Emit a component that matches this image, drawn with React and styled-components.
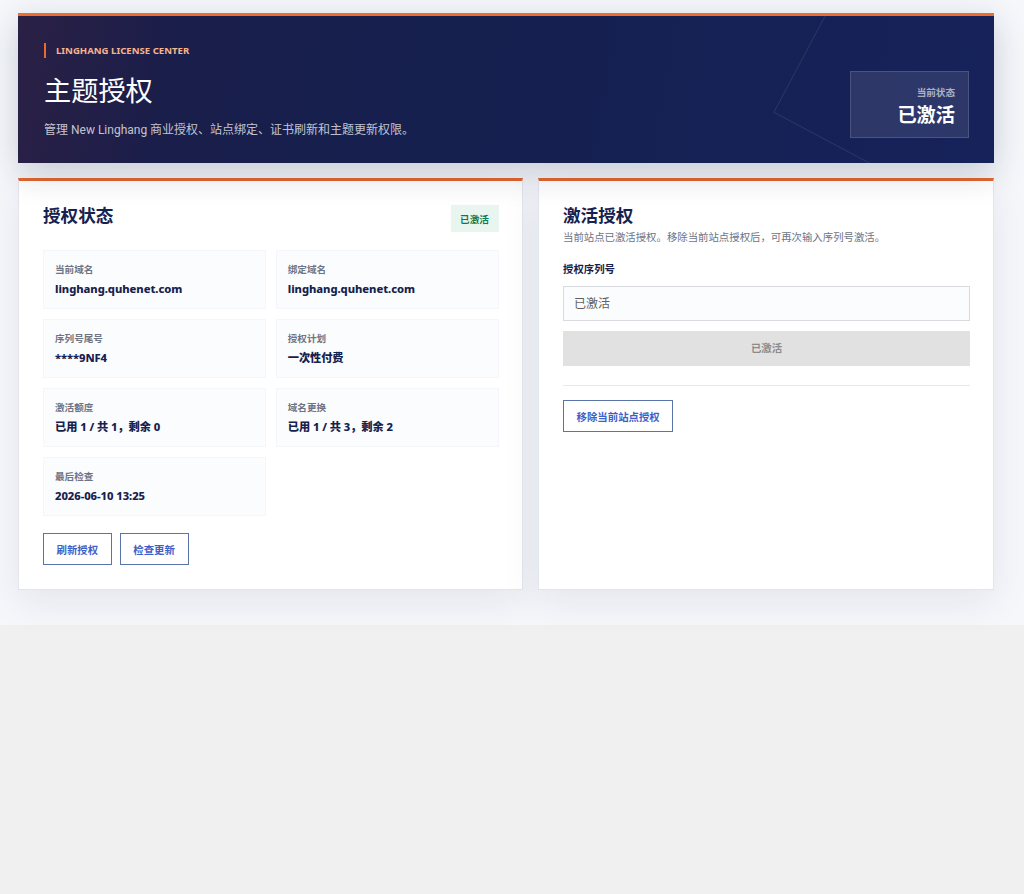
import React from "react";
import styled, { createGlobalStyle } from "styled-components";

const GlobalStyle = createGlobalStyle`
  * {
    box-sizing: border-box;
  }
  html,
  body {
    margin: 0;
    padding: 0;
    background: #f0f0f1;
  }
  body {
    min-height: 894px;
    font-family: "Noto Sans", "Noto Sans CJK SC", sans-serif;
    color: #16214d;
  }
`;

const Page = styled.div`
  background: #f5f7fb;
  padding: 13px 30px 35px 18px;
`;

const Hero = styled.header`
  position: relative;
  display: flex;
  justify-content: space-between;
  align-items: flex-start;
  height: 150px;
  padding: 27px 25px 0 26px;
  overflow: hidden;
  color: #fff;
  border-top: 3px solid #ee6c2c;
  background: linear-gradient(100deg, #2b2045 0%, #1a1e4a 16%, #15204f 45%, #16225a 100%);
`;

const HeroShadow = styled.div`
  position: relative;
  z-index: 1;
  box-shadow: 0 10px 32px rgba(22, 30, 60, 0.2);
`;

const HeroShape = styled.div`
  position: absolute;
  top: -59px;
  right: -38px;
  width: 220px;
  height: 220px;
  border: 1px solid rgba(255, 255, 255, 0.09);
  transform: rotate(28deg);
`;

const HeroText = styled.div`
  position: relative;
`;

const Eyebrow = styled.div`
  display: flex;
  align-items: center;
  height: 15px;
  padding-left: 10px;
  border-left: 2px solid #ea6a2a;
  font-size: 9.6px;
  font-weight: 700;
  color: #f8b48c;
`;

const HeroTitle = styled.h1`
  margin: 13px 0 0;
  font-size: 27.2px;
  line-height: 40px;
  font-weight: 400;
`;

const HeroSub = styled.p`
  margin: 10px 0 0;
  font-family: Roboto, "Noto Sans CJK SC", sans-serif;
  font-size: 12px;
  line-height: 18px;
  color: rgba(255, 255, 255, 0.74);
`;

const StatusBox = styled.div`
  position: relative;
  width: 119px;
  height: 67px;
  margin-top: 28px;
  padding: 14px 13px 0 0;
  text-align: right;
  border: 1px solid rgba(255, 255, 255, 0.14);
  background: rgba(255, 255, 255, 0.1);
`;

const StatusLabel = styled.div`
  font-size: 9.6px;
  line-height: 14px;
  font-weight: 700;
  color: rgba(255, 255, 255, 0.62);
`;

const StatusValue = styled.div`
  margin-top: 2px;
  font-size: 19.2px;
  line-height: 26px;
  font-weight: 700;
`;

const Columns = styled.div`
  display: grid;
  grid-template-columns: 505px 456px;
  gap: 15px;
  margin-top: 15px;
`;

const Card = styled.section`
  height: 412px;
  padding: 24px ${(props) => props.$paddingRight}px 24px 24px;
  background: #fff;
  border: 1px solid #e3e5ea;
  border-top: 3px solid #e2672d;
  box-shadow: 0 12px 36px rgba(22, 30, 60, 0.08);
`;

const CardHead = styled.div`
  display: flex;
  justify-content: space-between;
  align-items: flex-start;
  height: 45px;
`;

const CardTitle = styled.h2`
  margin: -2px 0 0;
  font-size: 17.6px;
  line-height: 24px;
  font-weight: 700;
  color: #16214d;
`;

const Badge = styled.span`
  display: flex;
  align-items: center;
  justify-content: center;
  width: 48px;
  height: 27px;
  font-size: 9.6px;
  font-weight: 700;
  color: #0d7a50;
  background: #e9f6ef;
`;

const InfoGrid = styled.div`
  display: grid;
  grid-template-columns: 1fr 1fr;
  gap: 10px;
`;

const InfoItem = styled.div`
  height: 59px;
  padding: 12px 11px 0;
  background: #fbfcfe;
  border: 1px solid #f4f6f9;
`;

const InfoLabel = styled.div`
  font-size: 9.6px;
  line-height: 14px;
  font-weight: 600;
  color: #6d7484;
`;

const InfoValue = styled.div`
  margin-top: 4px;
  font-size: 11.2px;
  line-height: 16px;
  font-weight: 800;
  letter-spacing: -0.05px;
  color: #16214d;
`;

const Actions = styled.div`
  display: flex;
  gap: 8px;
  margin-top: 17px;
`;

const GhostButton = styled.button`
  height: 32px;
  padding: 0 12.6px;
  font-family: inherit;
  font-size: 10.4px;
  font-weight: 700;
  color: #3f5fc8;
  background: #fff;
  border: 1px solid #5a76a8;
  border-radius: 0;
`;

const CardSub = styled.p`
  margin: 2px 0 0;
  font-size: 10.4px;
  line-height: 16px;
  color: #6d7484;
`;

const FieldLabel = styled.label`
  display: block;
  margin-top: 16px;
  font-size: 10.4px;
  line-height: 16px;
  font-weight: 700;
  color: #16214d;
`;

const TextInput = styled.input`
  display: block;
  width: 100%;
  height: 35px;
  margin-top: 9px;
  padding: 0 10px 2px;
  font-family: inherit;
  font-size: 12px;
  color: #5f5f5f;
  background: #fbfcfe;
  border: 1px solid #d9dbe0;
  border-radius: 0;
  outline: none;
`;

const DisabledButton = styled.button`
  display: block;
  width: 100%;
  height: 35px;
  margin-top: 10px;
  padding: 0 0 2px;
  font-family: inherit;
  font-size: 10.4px;
  font-weight: 700;
  color: #8b8b8b;
  background: #e1e1e1;
  border: 0;
  border-radius: 0;
`;

const Divider = styled.hr`
  height: 1px;
  margin: 19px 0 14px;
  background: #e7e8ec;
  border: 0;
`;

const items = [
  { label: "当前域名", value: "linghang.quhenet.com" },
  { label: "绑定域名", value: "linghang.quhenet.com" },
  { label: "序列号尾号", value: "****9NF4" },
  { label: "授权计划", value: "一次性付费" },
  { label: "激活额度", value: "已用 1 / 共 1，剩余 0" },
  { label: "域名更换", value: "已用 1 / 共 3，剩余 2" },
  { label: "最后检查", value: "2026-06-10 13:25" },
];

const App = () => (
  <>
    <GlobalStyle />
    <Page>
      <HeroShadow>
        <Hero>
          <HeroShape />
          <HeroText>
            <Eyebrow>LINGHANG LICENSE CENTER</Eyebrow>
            <HeroTitle>主题授权</HeroTitle>
            <HeroSub>管理 New Linghang 商业授权、站点绑定、证书刷新和主题更新权限。</HeroSub>
          </HeroText>
          <StatusBox>
            <StatusLabel>当前状态</StatusLabel>
            <StatusValue>已激活</StatusValue>
          </StatusBox>
        </Hero>
      </HeroShadow>
      <Columns>
        <Card $paddingRight={23.5}>
          <CardHead>
            <CardTitle>授权状态</CardTitle>
            <Badge>已激活</Badge>
          </CardHead>
          <InfoGrid>
            {items.map((item) => (
              <InfoItem key={item.label}>
                <InfoLabel>{item.label}</InfoLabel>
                <InfoValue>{item.value}</InfoValue>
              </InfoItem>
            ))}
          </InfoGrid>
          <Actions>
            <GhostButton>刷新授权</GhostButton>
            <GhostButton>检查更新</GhostButton>
          </Actions>
        </Card>
        <Card $paddingRight={23}>
          <CardTitle>激活授权</CardTitle>
          <CardSub>当前站点已激活授权。移除当前站点授权后，可再次输入序列号激活。</CardSub>
          <FieldLabel>授权序列号</FieldLabel>
          <TextInput value="已激活" readOnly />
          <DisabledButton disabled>已激活</DisabledButton>
          <Divider />
          <GhostButton>移除当前站点授权</GhostButton>
        </Card>
      </Columns>
    </Page>
  </>
);

export default App;
